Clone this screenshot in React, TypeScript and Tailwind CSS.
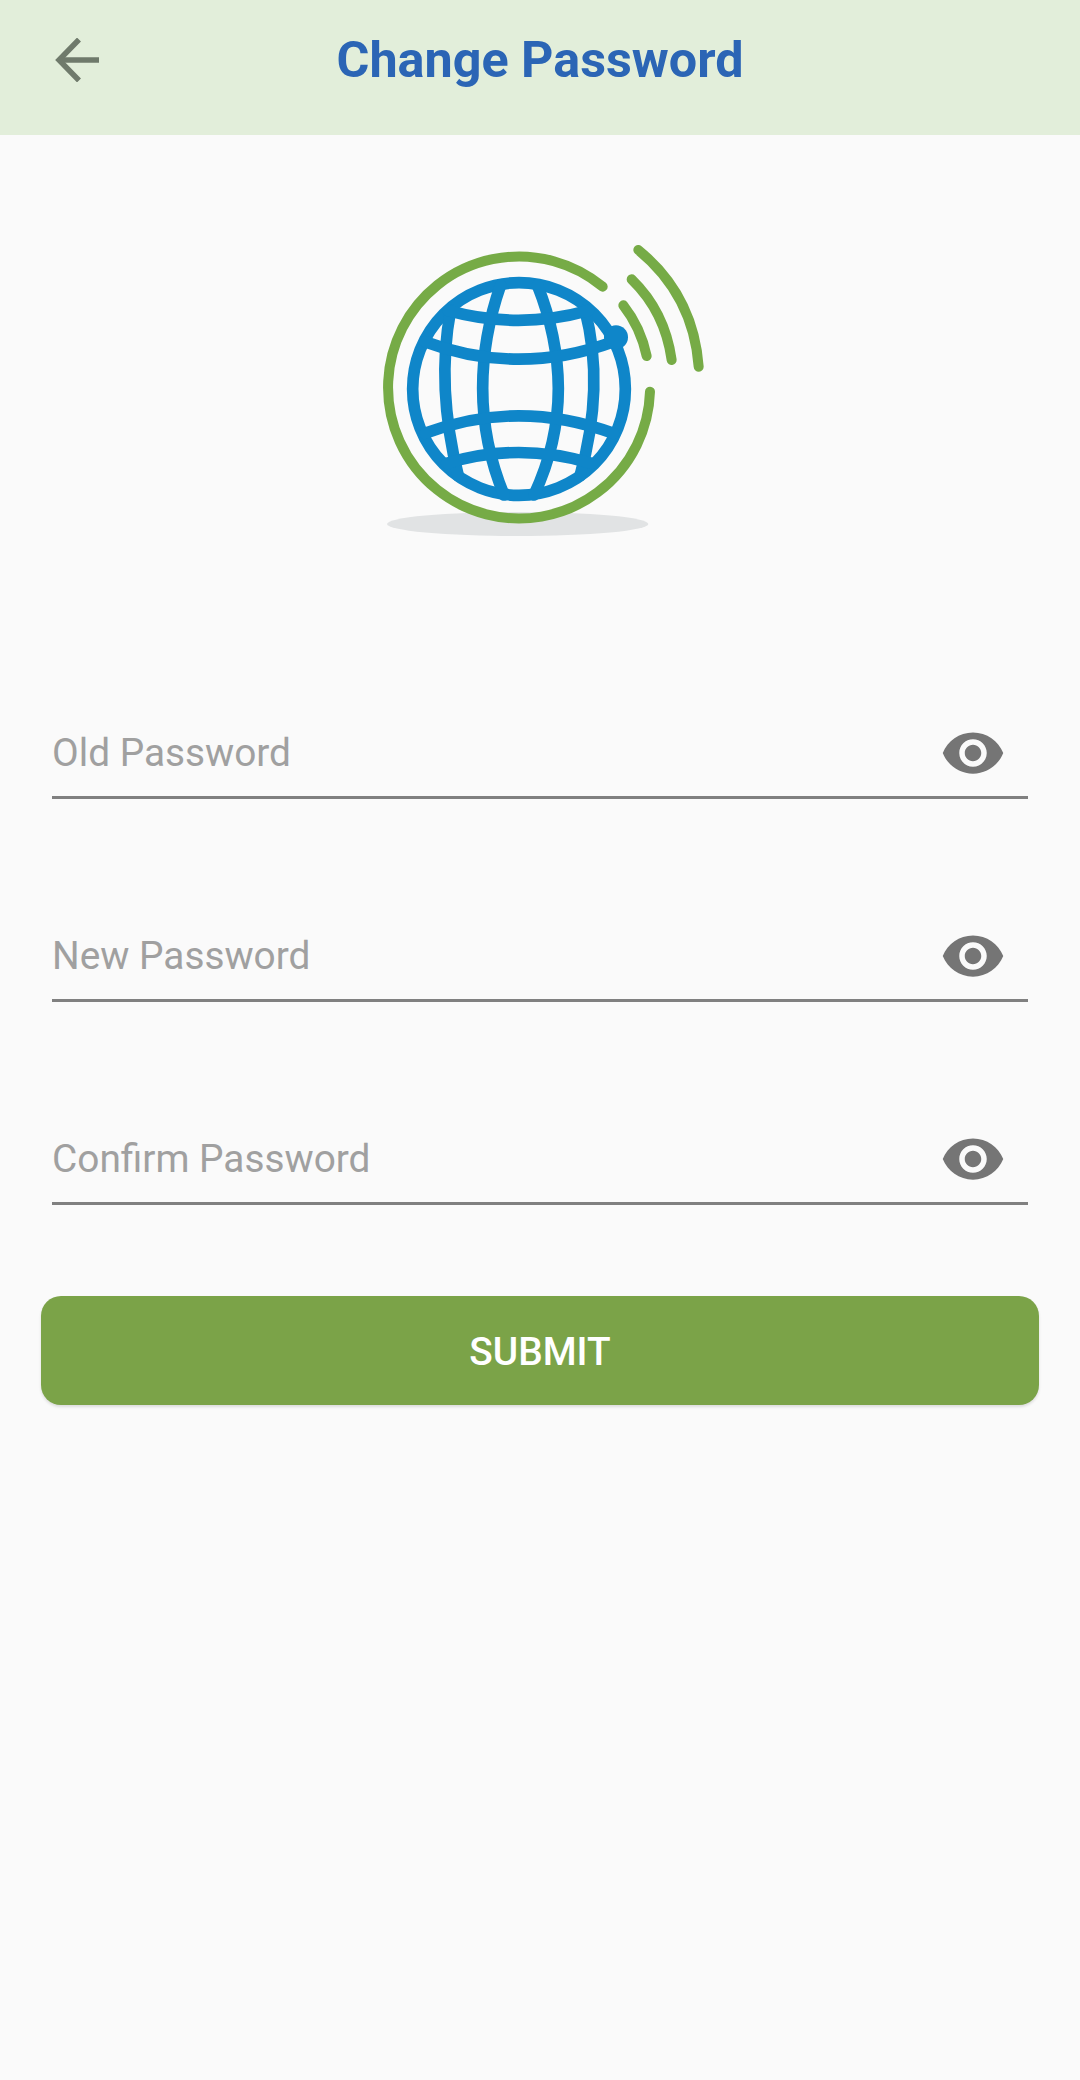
const font = "font-['Roboto',sans-serif]";

function BackArrow() {
  return (
    <svg viewBox="0 0 44 44" className="w-[44px] h-[44px]" fill="none" stroke="#6f7a6b" strokeWidth="5.5">
      <path d="M44 22H4" />
      <path d="M24 1.5 4 22l20 20.5" />
    </svg>
  );
}

function Eye() {
  return (
    <svg viewBox="0 0 24 24" className="w-[66px] h-[66px]" fill="#757575">
      <path d="M12 4.5C7 4.5 2.73 7.61 1 12c1.73 4.39 6 7.5 11 7.5s9.27-3.11 11-7.5c-1.73-4.39-6-7.5-11-7.5zM12 17c-2.76 0-5-2.24-5-5s2.24-5 5-5 5 2.24 5 5-2.24 5-5 5zm0-8c-1.66 0-3 1.34-3 3s1.34 3 3 3 3-1.34 3-3-1.34-3-3-3z" />
    </svg>
  );
}

// Globe with an orbit ring and signal arcs
function Logo() {
  return (
    <svg viewBox="0 0 1140 1020" className="w-[380px] h-[340px]" fill="none" strokeLinecap="round">
      <ellipse cx="503" cy="912" rx="392" ry="36" fill="#e1e3e4" />
      <g stroke="#76ab46" strokeWidth="30">
        <path d="M758 200A393 393 0 1 0 900 515" />
        <path d="M820 256Q872 322 890 408" />
        <path d="M845 178Q945 275 965 420" />
        <path d="M865 90Q1030 225 1046 440" />
      </g>
      <g stroke="#0f86c9" strokeWidth="35">
        <circle cx="507" cy="507" r="319" />
        <path d="M452 195Q398 350 398 505Q398 670 462 825" />
        <path d="M562 195Q624 350 625 505Q625 670 552 825" />
        <path d="M302 270Q258 500 325 768" />
        <path d="M705 270Q765 500 690 768" />
        <path d="M295 272Q505 330 715 272" />
        <path d="M225 365Q505 470 790 365" />
        <path d="M225 640Q505 535 790 640" />
        <path d="M290 730Q505 665 725 730" />
      </g>
      <circle cx="798" cy="352" r="36" fill="#0f86c9" />
    </svg>
  );
}

function Field({ label }: { label: string }) {
  return (
    <div className="flex h-[86px] items-start justify-between border-b-[3px] border-[#808080]">
      <span className="pt-[15px] text-[38.8px] leading-[50px] text-[#a0a0a0]">{label}</span>
      <span className="mr-[22px] mt-[7px]"><Eye /></span>
    </div>
  );
}

export default function App() {
  return (
    <div className={`${font} min-h-[2080px] bg-[#fafafa]`}>
      <header className="flex h-[135px] items-center bg-[#e2eeda] pb-[16px] relative">
        <span className="ml-[55px]"><BackArrow /></span>
        <h1 className="absolute inset-x-0 top-[32px] text-center text-[50.3px] leading-[56px] font-bold text-[#2b65b5]">
          Change Password
        </h1>
      </header>
      <div className="mt-[85px] flex justify-center">
        <Logo />
      </div>
      <div className="mt-[153px] flex flex-col gap-[117px] px-[52px]">
        <Field label="Old Password" />
        <Field label="New Password" />
        <Field label="Confirm Password" />
      </div>
      <div className="mt-[91px] px-[41px]">
        <button className="flex h-[109px] w-full items-center justify-center rounded-[20px] bg-[#7ba348] pt-[3px] text-[38.8px] font-medium text-white shadow-[0_2px_3px_rgba(0,0,0,0.12)]">
          SUBMIT
        </button>
      </div>
    </div>
  );
}
